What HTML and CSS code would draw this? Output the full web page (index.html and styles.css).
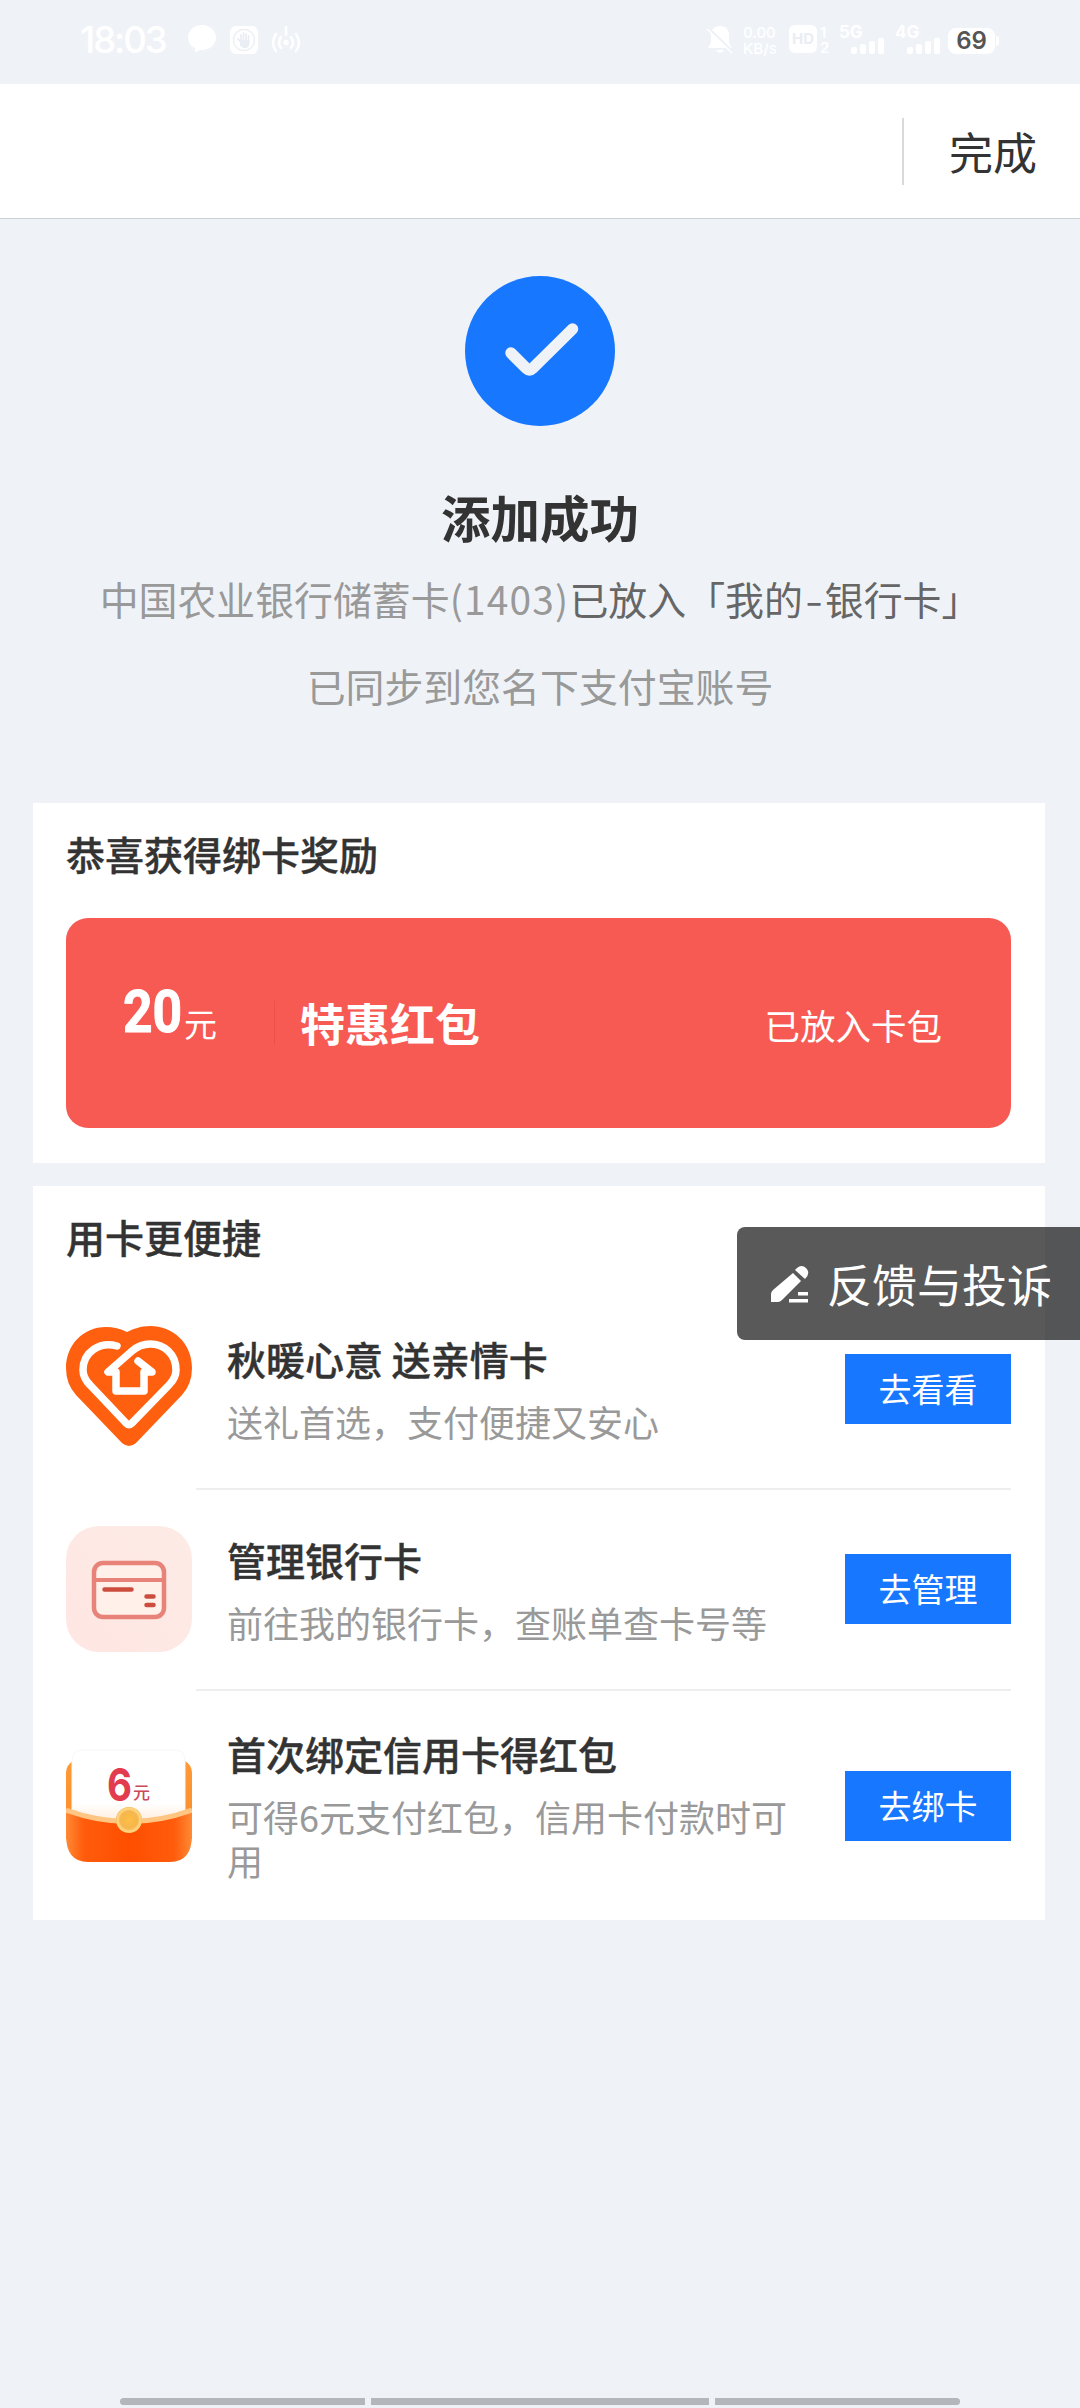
FILE: index.html
```html
<!DOCTYPE html>
<html lang="zh-CN">
<head>
<meta charset="utf-8">
<title>添加成功</title>
<link rel="stylesheet" href="styles.css">
</head>
<body>
<div class="status">
  <span class="clock">18:03</span>
  <svg class="st-bubble" width="28" height="28" viewBox="0 0 28 28"><path d="M14 0C6 0 0 5.600 0 12.500c0 4.700 2.800 8.600 7 10.700v4.300l5-2.600c9 .8 16-4.700 16-12.400C28 5.600 22 0 14 0z" fill="#fff"/></svg>
  <svg class="st-hand" width="28" height="28" viewBox="0 0 28 28"><rect width="28" height="28" rx="6" fill="#fff"/><circle cx="14" cy="14" r="10.500" fill="none" stroke="#edf1f6" stroke-width="1.500"/><path d="M8 13l3 3V9M13.500 14V7M16 14V8M18.500 15v-5" fill="none" stroke="#e9eef4" stroke-width="1.800" stroke-linecap="round"/><path d="M10 14h9.500v3c0 7-8 6-9.500 2z" fill="#e9eef4"/></svg>
  <svg class="st-hot" width="30" height="30" viewBox="0 0 30 30" fill="none" stroke="#fff" stroke-width="2.400" stroke-linecap="round"><path d="M5 9q-6 9 0 17M10 12q-4 6 0 11M25 9q6 9 0 17M20 12q4 6 0 11M15 2v8"/><circle cx="15" cy="17.500" r="1.500" fill="#fff"/></svg>
  <svg class="st-bell" width="28" height="30" viewBox="0 0 28 30"><path d="M14 1c-6 0-9 4-9 9v8l-3 5h24l-3-5v-8c0-5-3-9-9-9zM10 25h8q-4 6-8 0z" fill="#fff"/><path d="M1 2l26 25" stroke="#eff3f8" stroke-width="3"/><path d="M1 4l25 24" stroke="#fff" stroke-width="1.500"/></svg>
  <span class="speed"><span>0.00</span><span>KB/s</span></span>
  <span class="hd">HD</span>
  <span class="sims"><span>1</span><span>2</span></span>
  <span class="net"><span>5G</span><svg width="34" height="16" viewBox="0 0 34 16" fill="#fff"><rect y="9" width="6" height="7" rx="2"/><rect x="9" y="6" width="6" height="10" rx="2"/><rect x="18" y="3" width="6" height="13" rx="2"/><rect x="27" width="6" height="16" rx="2"/></svg></span>
  <span class="net"><span>4G</span><svg width="34" height="16" viewBox="0 0 34 16" fill="#fff"><rect y="9" width="6" height="7" rx="2"/><rect x="9" y="6" width="6" height="10" rx="2"/><rect x="18" y="3" width="6" height="13" rx="2"/><rect x="27" width="6" height="16" rx="2"/></svg></span>
  <span class="battery">69</span><span class="tip"></span>
</div>

<header class="header"><span class="done">完成</span></header>

<section class="result">
  <svg width="150" height="150" viewBox="0 0 150 150"><circle cx="75" cy="75" r="75" fill="#1777ff"/><path d="M46 77l15.500 15.500q3 3 6 0L107.500 53" fill="none" stroke="#eff3f8" stroke-width="11.500" stroke-linecap="round" stroke-linejoin="round"/></svg>
  <h1>添加成功</h1>
  <p class="line1">中国农业银行储蓄卡<span class="num">(1403)</span><span class="dark">已放入「我的<span class="dash">-</span>银行卡」</span></p>
  <p class="line2">已同步到您名下支付宝账号</p>
</section>

<section class="card reward">
  <h2>恭喜获得绑卡奖励</h2>
  <div class="coupon">
    <span class="amount"><b>20</b><i>元</i></span>
    <span class="cname">特惠红包</span>
    <span class="cstate">已放入卡包</span>
  </div>
</section>

<section class="card more">
  <h2>用卡更便捷</h2>
  <div class="row row1">
    <svg class="icon" width="126" height="126" viewBox="0 0 126 126">
      <path d="M61 6Q51 1 40 1C17 1 0 19 0 42q0 16 10 27l46 48q7 6 14 0l46-48q10-11 10-27C126 17 107 0 84 0 75 0 67 3 61 6z" fill="#ff6010"/>
      <path d="M51 20C34 15 17 26 17 44q0 8 7 15l36 38q3 3 6 0l37-38q7-7 7-15C110 28 98 18 84 18q-10 0-18 7L42 46h8v19h28V46h8L72 35" fill="none" stroke="#fff" stroke-width="7.500" stroke-linecap="round" stroke-linejoin="round"/>
    </svg>
    <div class="text"><h3>秋暖心意 送亲情卡</h3><p>送礼首选，支付便捷又安心</p></div>
    <span class="btn">去看看</span>
  </div>
  <div class="row row2">
    <svg class="icon" width="126" height="126" viewBox="0 0 126 126">
      <defs><linearGradient id="pk" x1="0" y1="1" x2="1" y2="0"><stop offset="0" stop-color="#ffe6e3"/><stop offset="1" stop-color="#fdebe6"/></linearGradient></defs>
      <rect width="126" height="126" rx="33" fill="url(#pk)"/>
      <rect x="28" y="37" width="70" height="54" rx="9" fill="#fff1ea" stroke="#e8837a" stroke-width="4.500"/>
      <path d="M28 54h70" stroke="#e8837a" stroke-width="4"/>
      <path d="M38.500 63.500h27M80.500 70.500h7M80.500 79h7" stroke="#cc4d3e" stroke-width="4.500" stroke-linecap="round"/>
    </svg>
    <div class="text"><h3>管理银行卡</h3><p>前往我的银行卡，查账单查卡号等</p></div>
    <span class="btn">去管理</span>
  </div>
  <div class="row last">
    <svg class="icon" width="126" height="126" viewBox="0 0 126 126">
      <defs>
        <linearGradient id="side" x1="0" y1="0" x2="0" y2="1"><stop offset="0" stop-color="#ff9a35"/><stop offset="1" stop-color="#f98a2c"/></linearGradient>
        <linearGradient id="pocket" x1="0" y1="0" x2="1" y2="0"><stop offset="0" stop-color="#ff8a35"/><stop offset=".14" stop-color="#ff5c0c"/><stop offset=".5" stop-color="#ff4e00"/><stop offset=".86" stop-color="#ff5c0c"/><stop offset="1" stop-color="#ff8a35"/></linearGradient>
        <linearGradient id="paper" x1="0" y1="0" x2="0" y2="1"><stop offset=".75" stop-color="#fff"/><stop offset="1" stop-color="#ffeede"/></linearGradient>
        <radialGradient id="coin"><stop offset="0" stop-color="#ffbf45"/><stop offset=".7" stop-color="#f5b64d"/><stop offset="1" stop-color="#fbc96e"/></radialGradient>
      </defs>
      <path d="M0 30q0-8 7-12h112q7 4 7 12v66H0z" fill="url(#side)"/>
      <path d="M6 18Q6 7 17 7h92q10 0 10 11v60H6z" fill="url(#paper)" stroke="#faf7f5" stroke-width="1"/>
      <path d="M0 66q63 23 126 0v26q0 27-22 27H22Q0 119 0 92z" fill="url(#pocket)"/>
      <path d="M0 67q63 23 126 0" fill="none" stroke="#ffc582" stroke-width="5"/>
      <circle cx="63" cy="77" r="13" fill="#efb04f"/><circle cx="63" cy="77" r="11.500" fill="url(#coin)" stroke="#ffd27c" stroke-width="2.500"/>
      <text x="41" y="58" class="six" textLength="25" lengthAdjust="spacingAndGlyphs">6</text>
      <text x="67" y="56" class="yuan">元</text>
    </svg>
    <div class="text"><h3>首次绑定信用卡得红包</h3><p>可得6元支付红包，信用卡付款时可用</p></div>
    <span class="btn">去绑卡</span>
  </div>
  <div class="feedback">
    <svg width="38" height="38" viewBox="0 0 38 38" fill="#fff"><path d="M22 8l8 8-19 19q-2 2-4 2H0v-8q0-2 2-4zM24 5q6-7 11-2 5 5-1 11zM27 27h10v3.500H27zM18 34h19v3.500H18z"/></svg>
    <span>反馈与投诉</span>
  </div>
</section>

<div class="nav"><i></i><i></i><i></i></div>
</body>
</html>
```

FILE: styles.css
```css
* { box-sizing: border-box; margin: 0; padding: 0; }
body {
  display: flex; flex-direction: column;
  width: 1080px; height: 2408px; overflow: hidden;
  background: #eff3f8; color: #333;
  font-family: "Noto Sans CJK SC", sans-serif;
}
i { font-style: normal; }
svg { display: block; flex: none; }

.status { display: flex; align-items: flex-start; height: 84px; padding: 25px 0 0 80px; color: #fff; font-family: Inter, sans-serif; }
.clock { width: 108px; font-size: 36.500px; font-weight: 500; line-height: 31px; letter-spacing: -2px; }
.st-hand { margin: 1px 0 0 14px; }
.st-hot { margin-left: 13px; }
.st-bell { margin-left: 405px; }
.speed { display: flex; flex-direction: column; width: 36px; margin-left: 9px; font-size: 15px; font-weight: 500; line-height: 16px; }
.hd { width: 28px; height: 28px; margin-left: 10px; border-radius: 6px; background: #fff; color: #e9eef4; font-size: 15px; font-weight: 700; line-height: 28px; text-align: center; }
.sims { display: flex; flex-direction: column; width: 10px; margin-left: 3px; font-size: 15px; font-weight: 600; line-height: 15px; }
.net { display: flex; flex-direction: column; width: 46px; margin-left: 9px; font-size: 17px; font-weight: 700; line-height: 14px; }
.net svg { margin: -1px 0 0 12px; }
.net + .net { margin-left: 10px; }
.battery { width: 47px; height: 26px; margin: 3px 0 0 7px; border-radius: 8px; background: #fff; color: #555; font-size: 24px; font-weight: 600; line-height: 26px; text-align: center; }
.tip { width: 3px; height: 10px; margin: 11px 0 0 1px; border-radius: 0 3px 3px 0; background: #fff; }

.header { display: flex; justify-content: flex-end; align-items: center; height: 135px; background: #fff; border-bottom: 1px solid #ccd1d8; }
.done { height: 67px; padding: 0 43px 0 45px; border-left: 2px solid #d8dadd; font-size: 44px; line-height: 66px; }

.result { display: flex; flex-direction: column; align-items: center; height: 584px; padding-top: 57px; }
.result h1 { margin-top: 61px; font-size: 49.500px; font-weight: 700; line-height: 60px; }
.line1 { margin-top: 21px; font-size: 38.900px; line-height: 60px; color: #999; white-space: nowrap; }
.line2 { margin-top: 27px; font-size: 38.900px; line-height: 60px; color: #999; }
.num { letter-spacing: 1.200px; }
.dark { color: #666; }
.dash { display: inline-block; width: 22px; text-align: center; transform: scaleX(1.300); }

.card { width: 1012px; margin-left: 33px; background: #fff; padding: 0 34px 0 33px; }
h2 { font-size: 39px; font-weight: 500; line-height: 60px; -webkit-text-stroke: .4px #333; }
.reward { height: 360px; padding-top: 20px; }
.coupon { display: flex; align-items: center; height: 210px; margin-top: 35px; padding: 0 69px 0 57px; border-radius: 22px; background: #f75a53; color: #fff; }
.amount { display: flex; align-items: center; width: 151px; height: 80px; }
.amount b { width: 61px; padding-bottom: 22px; font: 700 60px/74px Roboto, sans-serif; transform: scaleX(.86); transform-origin: left; -webkit-text-stroke: 1px #fff; }
.amount i { font-size: 33px; line-height: 40px; }
.cname { padding-left: 25px; border-left: 1px solid #ee5049; font-size: 45px; font-weight: 700; line-height: 44px; }
.cstate { margin-left: auto; padding-top: 2px; font-size: 35.500px; }

.more { position: relative; height: 734px; margin-top: 23px; padding-top: 20px; }
.row { display: flex; align-items: center; height: 202px; background: linear-gradient(#eee, #eee) 130px 100% / 815px 2px no-repeat; }
.row1 { margin-top: 22px; }
.row2 { height: 201px; padding-bottom: 3px; }
.last { height: 229px; background: none; }
.text { flex: none; width: 600px; margin-left: 4px; padding: 0 0 5px 31px; }
.text h3 { font-size: 39px; font-weight: 500; line-height: 56px; -webkit-text-stroke: .4px #333; }
.text p { margin-top: 13px; width: 565px; font-size: 36px; line-height: 44px; color: #999; }
.row2 .text { padding-bottom: 4px; }
.btn { width: 166px; height: 70px; margin-left: auto; background: #1777ff; color: #fff; font-size: 33px; line-height: 69px; text-align: center; }
.six { font: 700 45px Inter, sans-serif; fill: #e23c4e; }
.yuan { font: 500 17px "Noto Sans CJK SC", sans-serif; fill: #c9485a; }

.feedback { position: absolute; left: 704px; top: 41px; display: flex; align-items: center; width: 343px; height: 113px; padding-left: 34px; border-radius: 8px 0 0 8px; background: rgba(0,0,0,.65); color: #fff; font-size: 45px; line-height: 113px; white-space: nowrap; }
.feedback span { margin-left: 18px; }

.nav { display: flex; gap: 6px; width: 840px; height: 7px; margin: auto auto 3px; }
.nav i { flex: 245; background: #b3b7bb; }
.nav i:nth-child(2) { flex: 338; }
.nav i:first-child { border-radius: 4px 0 0 4px; }
.nav i:last-child { border-radius: 0 4px 4px 0; }
```
